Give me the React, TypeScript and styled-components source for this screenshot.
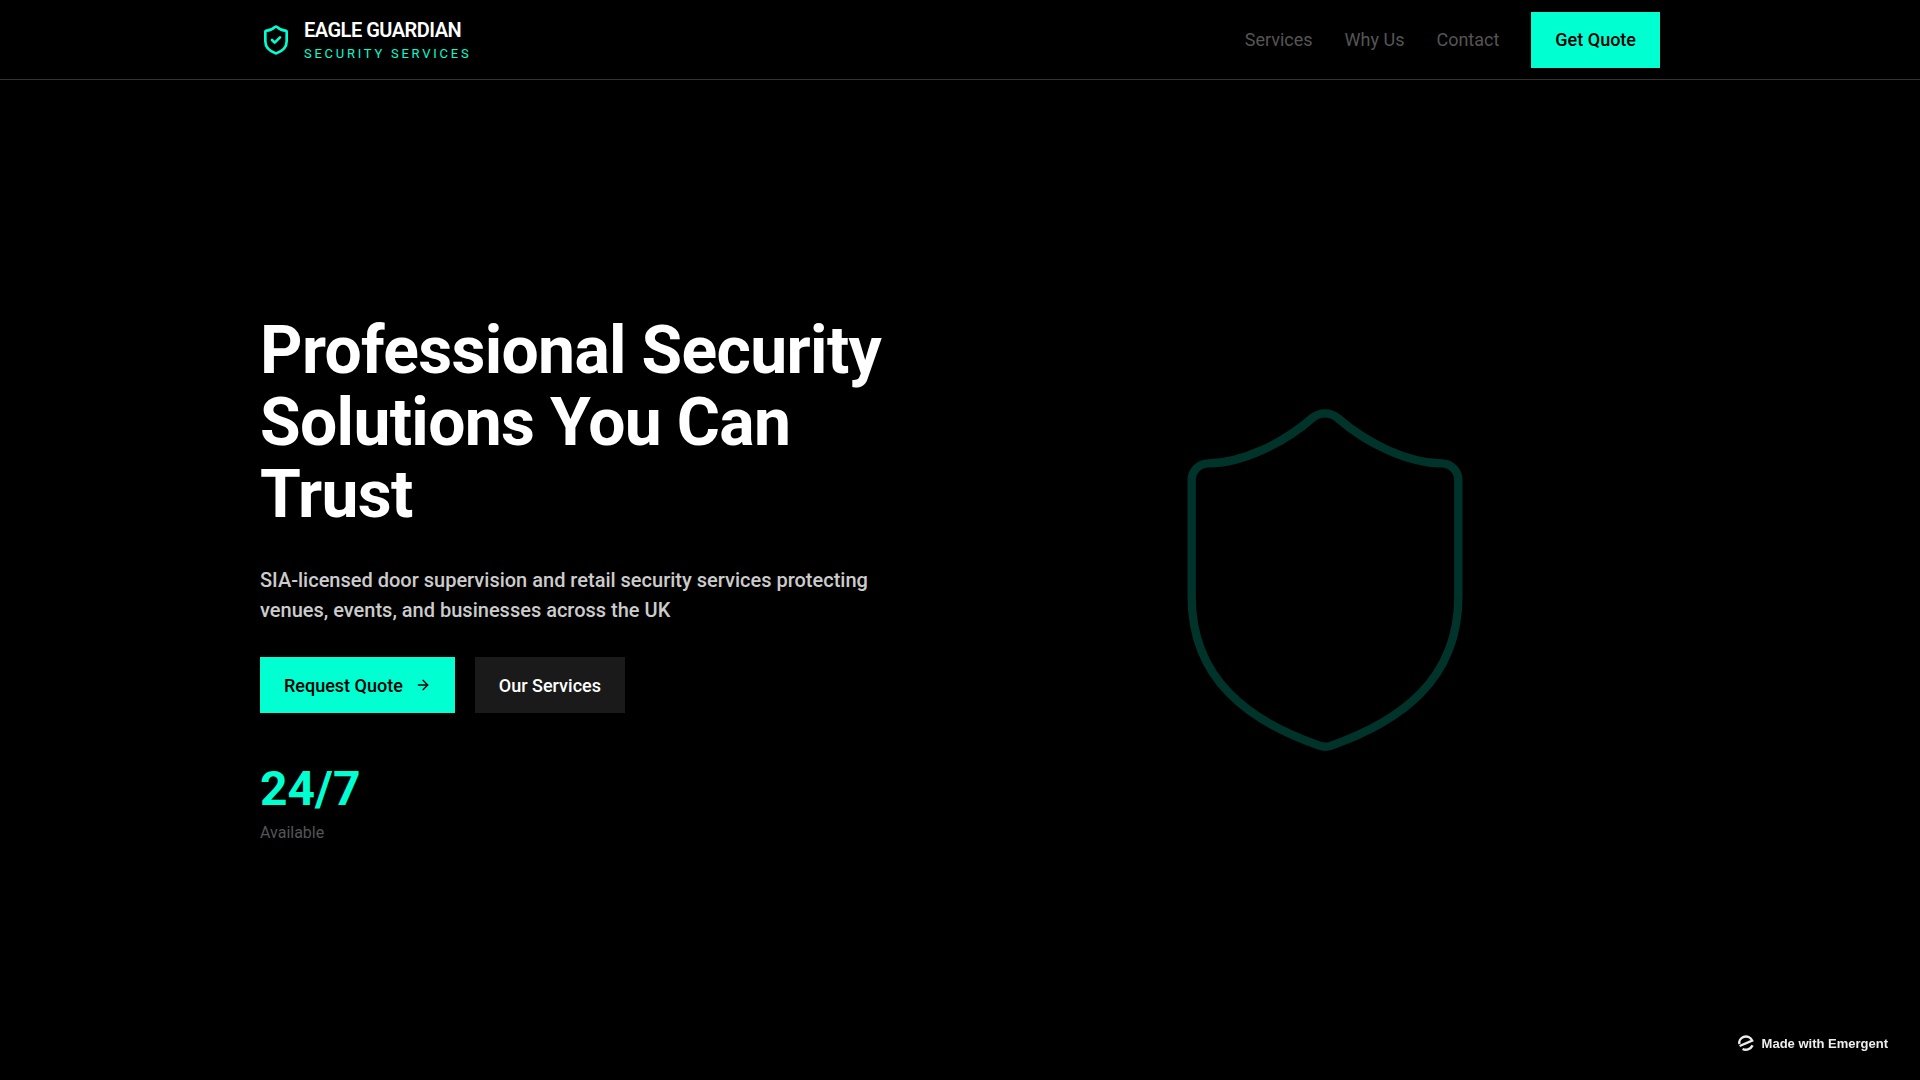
import styled, { createGlobalStyle } from 'styled-components'
import { ArrowRight, Shield, ShieldCheck } from 'lucide-react'

const GlobalStyle = createGlobalStyle`
  * { box-sizing: border-box; }
  html, body { margin: 0; padding: 0; background: #000; }
  body { font-family: Roboto, "Liberation Sans", sans-serif; color: #fff; }
`

const ACCENT = '#00ffd1'

const Page = styled.div`
  height: 1080px;
  background: #000;
  display: flex;
  flex-direction: column;
`

const Header = styled.header`
  height: 80px;
  border-bottom: 1px solid #333;
  display: flex;
  justify-content: center;
`

const HeaderInner = styled.div`
  width: 1400px;
  display: flex;
  align-items: center;
  justify-content: space-between;
`

const Brand = styled.div`
  display: flex;
  align-items: center;
  gap: 12px;
  color: ${ACCENT};
`

const BrandText = styled.div`
  display: flex;
  flex-direction: column;
`

const BrandName = styled.div`
  font-size: 20px;
  line-height: 28px;
  font-weight: 600;
  letter-spacing: -0.5px;
  color: #fff;
`

const BrandSub = styled.div`
  font-size: 13px;
  line-height: 20px;
  letter-spacing: 2.75px;
  font-weight: 400;
  color: ${ACCENT};
`

const Nav = styled.nav`
  display: flex;
  align-items: center;
  gap: 32px;
`

const NavLink = styled.a`
  font-size: 18px;
  color: #555;
`

const Button = styled.button<{ $variant?: 'primary' | 'dark' }>`
  height: 56px;
  padding: 0 24px;
  border: 0;
  display: inline-flex;
  align-items: center;
  gap: 12px;
  font-family: inherit;
  font-size: 18px;
  font-weight: 500;
  background: ${p => (p.$variant === 'dark' ? '#1a1a1a' : ACCENT)};
  color: ${p => (p.$variant === 'dark' ? '#fff' : '#000')};
`

const Hero = styled.main`
  flex: 1;
  display: flex;
  justify-content: center;
  align-items: center;
`

const HeroGrid = styled.div`
  width: 1400px;
  display: grid;
  grid-template-columns: 1fr 1fr;
  gap: 60px;
  align-items: center;
`

const Title = styled.h1`
  margin: 0 0 34px;
  font-size: 66px;
  line-height: 72px;
  font-weight: 700;
  letter-spacing: -0.66px;
`

const Lead = styled.p`
  margin: 0 0 32px;
  font-size: 20px;
  line-height: 30px;
  font-weight: 500;
  color: #ccc;
`

const Actions = styled.div`
  display: flex;
  gap: 20px;
  margin-bottom: 52px;
`

const Stat = styled.div`
  font-size: 48px;
  line-height: 48px;
  font-weight: 700;
  color: ${ACCENT};
  margin-bottom: 8px;
`

const StatLabel = styled.div`
  font-size: 16px;
  line-height: 24px;
  color: #555;
`

const Visual = styled.div`
  display: flex;
  justify-content: center;
  align-items: center;
  color: ${ACCENT};
`

const Badge = styled.div`
  position: fixed;
  right: 32px;
  bottom: 28px;
  display: flex;
  align-items: center;
  gap: 7px;
  font-family: "Liberation Sans", Arial, sans-serif;
  font-size: 13px;
  font-weight: 700;
  color: #eee;
`

export default function App() {
  return (
    <Page>
      <GlobalStyle />
      <Header>
        <HeaderInner>
          <Brand>
            <ShieldCheck size={32} strokeWidth={2} />
            <BrandText>
              <BrandName>EAGLE GUARDIAN</BrandName>
              <BrandSub>SECURITY SERVICES</BrandSub>
            </BrandText>
          </Brand>
          <Nav>
            <NavLink>Services</NavLink>
            <NavLink>Why Us</NavLink>
            <NavLink>Contact</NavLink>
            <Button>Get Quote</Button>
          </Nav>
        </HeaderInner>
      </Header>
      <Hero>
        <HeroGrid>
          <div>
            <Title>Professional Security Solutions You Can Trust</Title>
            <Lead>SIA-licensed door supervision and retail security services protecting venues, events, and businesses across the UK</Lead>
            <Actions>
              <Button>Request Quote <ArrowRight size={16} /></Button>
              <Button $variant="dark">Our Services</Button>
            </Actions>
            <Stat>24/7</Stat>
            <StatLabel>Available</StatLabel>
          </div>
          <Visual>
            <Shield size={400} strokeWidth={0.5} opacity={0.2} />
          </Visual>
        </HeroGrid>
      </Hero>
      <Badge>
        <svg width="18" height="18" viewBox="0 0 18 18" fill="none" stroke="#eee" strokeWidth="2.4" strokeLinecap="butt">
          <path d="M2.6 12 L15.2 6.6 C13.8 3.2 10 1.6 6.6 2.9 C3.4 4.2 1.8 7.4 2.4 10" />
          <path d="M5.6 15 C9 16.7 13.4 15.6 15.6 11.4" />
        </svg>
        Made with Emergent
      </Badge>
    </Page>
  )
}
